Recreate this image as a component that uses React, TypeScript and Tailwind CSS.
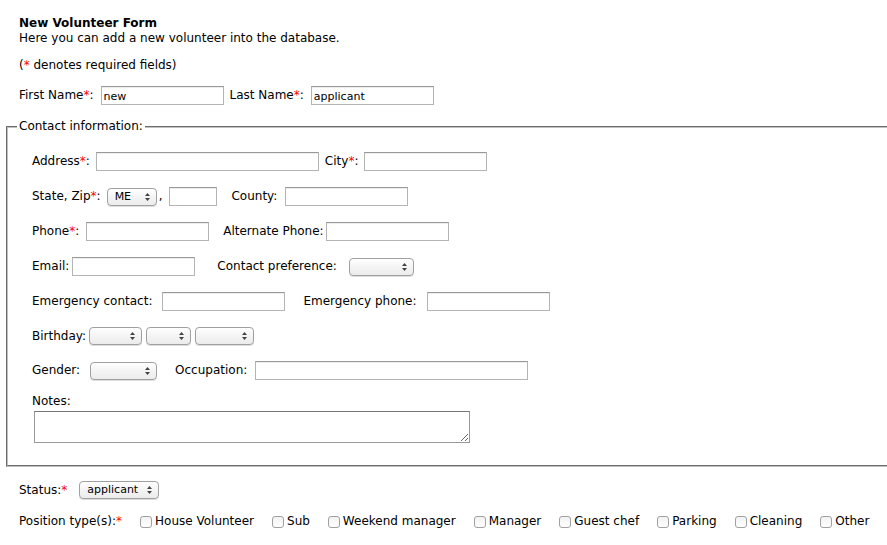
import type { ReactNode } from "react";

function Star() {
  return <span className="text-[#f00]">*</span>;
}

type TextFieldProps = {
  id: string;
  label: ReactNode;
  width?: string;
  gap?: string;
  value?: string;
};

function TextField({ id, label, width = "w-[123px]", gap = "gap-1.5", value }: TextFieldProps) {
  return (
    <div className={`flex items-center ${gap}`}>
      <label htmlFor={id}>{label}</label>
      <input
        id={id}
        type="text"
        defaultValue={value}
        className={`h-[19px] border border-[#b4b4b4] border-t-[#999] bg-white px-0.5 pt-0.5 text-[11px] leading-[15px] shadow-[inset_0_1px_0_#eee] outline-none ${width}`}
      />
    </div>
  );
}

type MenuProps = { id: string; width: string; options?: string[]; name?: string };

function Menu({ id, width, options = [""], name }: MenuProps) {
  return (
    <span className={`relative block h-[18px] self-end ${width}`}>
      <select
        id={id}
        aria-label={name}
        className="block h-[18px] w-full appearance-none rounded border border-[#a0a0a0] bg-linear-to-b from-white via-[#f4f4f4] to-[#ececec] pl-[7px] text-[11px] leading-4 shadow-[0_1px_0_#ddd] outline-none"
      >
        {options.map((option) => (
          <option key={option}>{option}</option>
        ))}
      </select>
      <svg viewBox="0 0 5 8" className="pointer-events-none absolute top-[5px] right-[7px] h-2 w-[5px]" fill="#444">
        <path d="M2.5 0 5 3H0zM2.5 8 0 5h5z" />
      </svg>
    </span>
  );
}

const positions = [
  "House Volunteer",
  "Sub",
  "Weekend manager",
  "Manager",
  "Guest chef",
  "Parking",
  "Cleaning",
  "Other",
];

export default function App() {
  return (
    <form className="bg-white pt-4 pl-1.5 font-['DejaVu_Sans',Verdana,sans-serif] text-[12px] leading-[15px] whitespace-nowrap text-black">
      <header className="pl-[13px]">
        <h1 className="font-bold">New Volunteer Form</h1>
        <p>Here you can add a new volunteer into the database.</p>
        <p className="mt-3">
          (<Star /> denotes required fields)
        </p>
      </header>

      <div className="mt-[13px] flex gap-1.5 pl-[13px]">
        <TextField id="first-name" label={<>First Name<Star />:</>} value="new" gap="gap-[7px]" />
        <TextField id="last-name" label={<>Last Name<Star />:</>} value="applicant" gap="gap-[7px]" />
      </div>

      <fieldset className="mt-3.5 border-2 border-r-0 border-[#c0c0c0] pb-[22px] pl-[9px] [border-style:groove]">
        <legend className="px-0.5">Contact information:</legend>
        <div className="flex flex-col gap-4 pt-[18px] pl-[15px]">
          <div className="flex gap-1.5">
            <TextField id="address" label={<>Address<Star />:</>} width="w-[223px]" />
            <TextField id="city" label={<>City<Star />:</>} />
          </div>
          <div className="flex gap-3.5">
            <div className="flex items-center">
              <label htmlFor="state" className="mr-1.5">State, Zip<Star />:</label>
              <Menu id="state" width="w-[50px]" options={["ME"]} />
              <span className="mr-[7px] ml-0.5">,</span>
              <input
                aria-label="Zip"
                type="text"
                className="h-[19px] w-12 border border-[#b4b4b4] border-t-[#999] px-0.5 text-[11px] shadow-[inset_0_1px_0_#eee] outline-none"
              />
            </div>
            <TextField id="county" label="County:" gap="gap-2" />
          </div>
          <div className="flex gap-3.5">
            <TextField id="phone" label={<>Phone<Star />:</>} gap="gap-[7px]" />
            <TextField id="alternate-phone" label="Alternate Phone:" gap="gap-0.5" />
          </div>
          <div className="flex gap-[22px]">
            <TextField id="email" label="Email:" gap="gap-[3px]" />
            <div className="flex items-center gap-3">
              <label htmlFor="preference">Contact preference:</label>
              <Menu id="preference" width="w-[65px]" />
            </div>
          </div>
          <div className="flex gap-[18px]">
            <TextField id="emergency-contact" label="Emergency contact:" gap="gap-2.5" />
            <TextField id="emergency-phone" label="Emergency phone:" gap="gap-2.5" />
          </div>
          <div className="flex items-center gap-1">
            <div className="flex items-center gap-[3px]">
              <label htmlFor="month">Birthday:</label>
              <Menu id="month" width="w-[53px]" />
            </div>
            <Menu id="day" name="Day" width="w-[45px]" />
            <Menu id="year" name="Year" width="w-[59px]" />
          </div>
          <div className="flex gap-[18px]">
            <div className="flex items-center gap-2.5">
              <label htmlFor="gender">Gender:</label>
              <Menu id="gender" width="w-[67px]" />
            </div>
            <TextField id="occupation" label="Occupation:" gap="gap-2" width="w-[273px]" />
          </div>
          <div className="-mt-0.5 flex flex-col gap-0.5">
            <label htmlFor="notes">Notes:</label>
            <textarea
              id="notes"
              className="ml-0.5 block h-8 w-[436px] border border-[#999] border-t-[#777] px-0.5 text-[11px] outline-none"
            />
          </div>
        </div>
      </fieldset>

      <div className="mt-3.5 flex items-center gap-3 pl-[13px]">
        <label htmlFor="status">Status:<Star /></label>
        <Menu id="status" width="w-20" options={["applicant"]} />
      </div>

      <div role="group" aria-labelledby="positions" className="mt-[15px] flex items-center gap-[18px] pl-[13px]">
        <span id="positions">Position type(s):<Star /></span>
        {positions.map((position) => (
          <label key={position} className="flex items-center gap-[3px]">
            <input
              type="checkbox"
              className="size-3 appearance-none rounded-[3px] border border-[#a0a0a0] bg-linear-to-b from-[#f2f2f2] to-white checked:bg-[#777]"
            />
            {position}
          </label>
        ))}
      </div>
    </form>
  );
}
